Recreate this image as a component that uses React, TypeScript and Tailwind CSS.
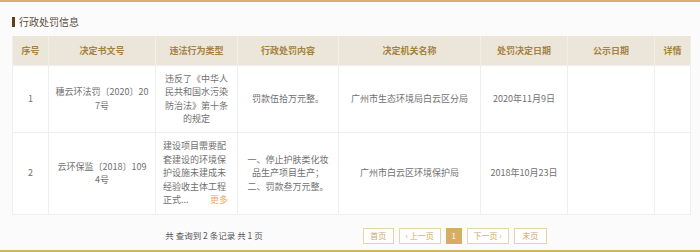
import React from 'react';

const font = { fontFamily: '"Noto Sans CJK SC", "Noto Sans", sans-serif' };

const headers = ['序号', '决定书文号', '违法行为类型', '行政处罚内容', '决定机关名称', '处罚决定日期', '公示日期', '详情'];
const widths = ['w-[36px]', 'w-[107px]', 'w-[82px]', 'w-[101px]', 'w-[142px]', 'w-[87px]', 'w-[87px]', 'w-[36px]'];

function PageButton({ label, width, active }: { label: string; width: string; active?: boolean }) {
  return (
    <span
      className={
        active
          ? `flex h-[16px] ${width} items-center justify-center bg-[#d6ae62] text-[8px] text-white`
          : `flex h-[16px] ${width} items-center justify-center border border-[#e6d3aa] bg-white text-[8px] text-[#c9a970]`
      }
    >
      {label}
    </span>
  );
}

export default function App() {
  const cell = 'border border-[#efefef] px-[7px] py-[6px] text-center align-middle';
  return (
    <div className="h-[252px] w-[700px] overflow-hidden bg-[#fbfbfb]" style={font}>
      <div className="h-[2px] bg-[#d5b26c]" />
      <div className="flex h-[248px] flex-col px-[12px]">
        <div className="mt-[15px] flex h-[10px] items-center gap-[4px]">
          <span className="h-[10px] w-[3px] bg-[#5e401d]" />
          <span className="text-[10px] leading-none text-[#5b4b3b]">行政处罚信息</span>
        </div>
        <table className="mt-[9px] w-[678px] table-fixed border-collapse bg-white text-[9px] leading-[13.5px] text-[#707070]">
          <colgroup>
            {widths.map((w, i) => (
              <col key={i} className={w} />
            ))}
          </colgroup>
          <thead>
            <tr className="h-[29px] bg-[#ebe5da]">
              {headers.map((h) => (
                <th key={h} className="border-x border-[#f3efe8] text-center align-middle font-bold text-[#a6823f]">
                  {h}
                </th>
              ))}
            </tr>
          </thead>
          <tbody>
            <tr className="h-[66px]">
              <td className={cell}>1</td>
              <td className={`${cell} whitespace-nowrap !px-[2px]`}>
                穗云环法罚〔2020〕20
                <br />
                7号
              </td>
              <td className={cell}>
                违反了《中华人
                <br />
                民共和国水污染
                <br />
                防治法》第十条
                <br />
                的规定
              </td>
              <td className={cell}>罚款伍拾万元整。</td>
              <td className={cell}>广州市生态环境局白云区分局</td>
              <td className={cell}>2020年11月9日</td>
              <td className={cell}></td>
              <td className={cell}></td>
            </tr>
            <tr className="h-[82px]">
              <td className={cell}>2</td>
              <td className={`${cell} whitespace-nowrap !px-[2px]`}>
                云环保监〔2018〕109
                <br />
                4号
              </td>
              <td className={`${cell} !text-left`}>
                建设项目需要配
                <br />
                套建设的环境保
                <br />
                护设施未建成未
                <br />
                经验收主体工程
                <br />
                <span className="flex justify-between">
                  <span>正式...</span>
                  <span className="pr-[2px] text-[#f2a65c]">更多</span>
                </span>
              </td>
              <td className={cell}>
                一、停止护肤类化妆
                <br />
                品生产项目生产；
                <br />
                二、罚款叁万元整。
              </td>
              <td className={cell}>广州市白云区环境保护局</td>
              <td className={cell}>2018年10月23日</td>
              <td className={cell}></td>
              <td className={cell}></td>
            </tr>
          </tbody>
        </table>
        <div className="mt-[13px] flex items-center justify-center pl-[12px]">
          <span className="text-[8.5px] text-[#555555]">共 查询到 2 条记录 共 1 页</span>
          <div className="ml-[100px] flex items-center gap-[5px]">
            <PageButton label="首页" width="w-[31px]" />
            <PageButton label="‹ 上一页" width="w-[42px]" />
            <PageButton label="1" width="w-[16px]" active />
            <PageButton label="下一页 ›" width="w-[42px]" />
            <PageButton label="末页" width="w-[33px]" />
          </div>
        </div>
      </div>
      <div className="h-[2px] bg-[#d5b26c]" />
    </div>
  );
}
